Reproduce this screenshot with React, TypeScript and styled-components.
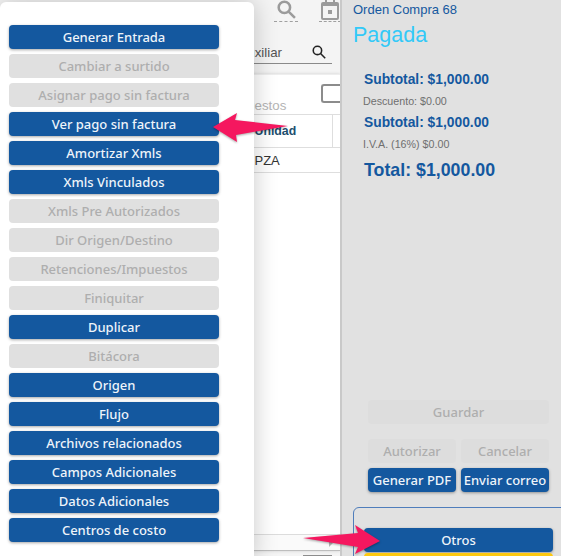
import * as React from "react";
import styled, { createGlobalStyle } from "styled-components";

const GlobalStyle = createGlobalStyle`
  html, body {
    margin: 0;
    padding: 0;
    width: 561px;
    height: 556px;
    overflow: hidden;
    background: #f4f4f4;
  }
`;

const Page = styled.div`
  position: relative;
  width: 561px;
  height: 556px;
  overflow: hidden;
  display: flex;
  font-family: "Liberation Sans", Arial, sans-serif;
`;

const Main = styled.div`
  width: 340px;
  height: 556px;
  flex: none;
  display: flex;
  flex-direction: column;
`;

const Toolbar = styled.div`
  height: 22px;
  flex: none;
  display: flex;
  justify-content: flex-end;
  gap: 21px;
  margin-right: -1px;
`;

const ToolItem = styled.div<{ $w: number }>`
  width: ${(p) => p.$w}px;
  height: 21px;
  border-bottom: 1px dashed #a0a0a0;
  display: flex;
  justify-content: center;
  color: #9b9b9b;
`;

const SearchRow = styled.div`
  margin: 20px 8px 0 200px;
  height: 21px;
  flex: none;
  display: flex;
  align-items: center;
  justify-content: flex-end;
  border-bottom: 1px solid #8a8a8a;
  font-size: 13.3px;
  color: #555;
  padding: 0 6px 0 0;
  gap: 30px;
`;

const SearchGlyph = styled.span`
  color: #222;
  display: flex;
  margin-top: -2px;
`;

const Sheet = styled.div`
  margin-top: 10px;
  flex: none;
  background: #fff;
  border-top: 1px solid #eee;
  box-shadow: 0 0 3px rgba(0, 0, 0, 0.15);
  height: 476px;
  display: flex;
  flex-direction: column;
`;

const SheetHead = styled.div`
  height: 30px;
  flex: none;
  display: flex;
  justify-content: space-between;
  padding: 9px 0 0 225px;
`;

const Hint = styled.span`
  align-self: flex-end;
  font-size: 13.3px;
  color: #b4b4b4;
  padding-bottom: 1px;
`;

const CheckBox = styled.span`
  width: 17px;
  height: 15px;
  border: 2px solid #8c8c8c;
  border-right: 0;
  border-radius: 3px 0 0 3px;
  align-self: flex-start;
`;

const TableRow = styled.div<{ $h: number; $head?: boolean }>`
  height: ${(p) => p.$h}px;
  flex: none;
  display: grid;
  grid-template-columns: 254.5px 78px 1fr;
  align-items: center;
  border-top: 1px solid #dedede;
  font-size: ${(p) => (p.$head ? 12.3 : 13)}px;
  color: ${(p) => (p.$head ? "#1d4f6e" : "#333")};
  font-weight: ${(p) => (p.$head ? 700 : 400)};
`;

const Cell = styled.div<{ $line?: boolean }>`
  height: 100%;
  display: flex;
  align-items: center;
  border-right: ${(p) => (p.$line ? "1px solid #dedede" : "0")};
`;

const SheetFooter = styled.div`
  margin-top: auto;
  height: 15px;
  flex: none;
  background: #fafafa;
  border-top: 1px solid #dcdcdc;
  border-bottom: 1px solid #bdbdbd;
  display: flex;
  justify-content: flex-end;
  align-items: center;
  padding-right: 7px;
`;

const ScrollArrow = styled.span`
  width: 0;
  height: 0;
  border-left: 4px solid #b5b5b5;
  border-top: 4px solid transparent;
  border-bottom: 4px solid transparent;
`;

const BottomBar = styled.div`
  margin: 4px 8px 0 303px;
  height: 2px;
  flex: none;
  background: #8c8c8c;
`;

const Panel = styled.div`
  flex: 1;
  border-left: 2px solid #c9c9c9;
  background: #e1e1e1;
  padding: 2px 0 0 11px;
  display: flex;
  flex-direction: column;
  min-width: 0;
`;

const Order = styled.div`
  font-size: 13px;
  line-height: 15px;
  color: #14589f;
`;

const Status = styled.div`
  font-size: 21.5px;
  line-height: 25px;
  color: #33c9f8;
  margin-top: 6px;
`;

const Totals = styled.div`
  margin: 24px 0 0 11px;
  display: flex;
  flex-direction: column;
`;

const Subtotal = styled.div`
  font-size: 13.8px;
  font-weight: 700;
  line-height: 16px;
  color: #14589f;
`;

const Note = styled.div`
  font-size: 10.7px;
  line-height: 12px;
  color: #6f6f6f;
  margin: 7px 0 8px -1px;
`;

const Total = styled.div`
  font-size: 17.8px;
  font-weight: 700;
  line-height: 20px;
  color: #14589f;
  margin-top: 2px;
`;

const Actions = styled.div`
  margin: 220px 12px 0 15px;
  display: grid;
  grid-template-columns: 88px 88px;
  column-gap: 5px;
  row-gap: 5px;
`;

const Btn = styled.div<{ $off?: boolean; $wide?: boolean; $gap?: number }>`
  height: 24px;
  border-radius: 4px;
  flex: none;
  display: flex;
  align-items: center;
  justify-content: center;
  white-space: nowrap;
  font-family: "Noto Sans", sans-serif;
  font-size: 13px;
  font-weight: 500;
  grid-column: ${(p) => (p.$wide ? "1 / span 2" : "auto")};
  margin-bottom: ${(p) => p.$gap ?? 0}px;
  background: ${(p) => (p.$off ? "#e0e0e0" : "#14589f")};
  color: ${(p) => (p.$off ? "#aeaeae" : "#eef4fa")};
  box-shadow: ${(p) => (p.$off ? "none" : "0 1px 3px rgba(0,0,0,.35)")};
`;

const PanelBtn = styled(Btn)`
  background: ${(p) => (p.$off ? "#dddddd" : "#14589f")};
`;

const Others = styled.fieldset`
  margin: 15px 0 0 0;
  padding: 20px 29px 0 10px;
  height: 60px;
  box-sizing: border-box;
  width: 230px;
  border: 1px solid #4f7dbb;
  border-radius: 6px 0 0 0;
  display: flex;
  flex-direction: column;
  gap: 1px;
  min-width: 0;
`;

const YellowBtn = styled.div`
  height: 12px;
  flex: none;
  border-radius: 4px 4px 0 0;
  background: #fdc90f;
`;

const Menu = styled.div`
  position: absolute;
  left: 0;
  top: 2px;
  width: 254px;
  height: 560px;
  box-sizing: border-box;
  padding: 23px 35px 0 9px;
  background: #fff;
  border-radius: 6px;
  box-shadow: 0 0 24px rgba(0, 0, 0, 0.22);
  display: flex;
  flex-direction: column;
  gap: 5px;
`;

const Arrows = styled.svg`
  position: absolute;
  left: 0;
  top: 0;
  pointer-events: none;
  filter: drop-shadow(0 1px 1px rgba(0, 0, 0, 0.35));
`;

const items: [string, boolean][] = [
  ["Generar Entrada", false],
  ["Cambiar a surtido", true],
  ["Asignar pago sin factura", true],
  ["Ver pago sin factura", false],
  ["Amortizar Xmls", false],
  ["Xmls Vinculados", false],
  ["Xmls Pre Autorizados", true],
  ["Dir Origen/Destino", true],
  ["Retenciones/Impuestos", true],
  ["Finiquitar", true],
  ["Duplicar", false],
  ["Bitácora", true],
  ["Origen", false],
  ["Flujo", false],
  ["Archivos relacionados", false],
  ["Campos Adicionales", false],
  ["Datos Adicionales", false],
  ["Centros de costo", false],
];

function SearchIcon({ size, width }: { size: number; width: number }) {
  return (
    <svg width={size} height={size} viewBox="0 0 18 18" fill="none" stroke="currentColor" strokeWidth={width}>
      <circle cx="7" cy="7" r="5.4" />
      <path d="M11 11l6 6" />
    </svg>
  );
}

function CalendarIcon() {
  return (
    <svg width="18" height="20" viewBox="0 0 18 20">
      <path
        fill="currentColor"
        d="M4 0h2v2h6V0h2v2h2a2 2 0 0 1 2 2v14a2 2 0 0 1-2 2H2a2 2 0 0 1-2-2V4a2 2 0 0 1 2-2h2zM2 6v12h14V6zm5 4h4v4H7z"
      />
    </svg>
  );
}

export default function App() {
  return (
    <Page>
      <GlobalStyle />
      <Main>
        <Toolbar>
          <ToolItem $w={24}>
            <SearchIcon size={19} width={2.4} />
          </ToolItem>
          <ToolItem $w={22}>
            <CalendarIcon />
          </ToolItem>
        </Toolbar>
        <SearchRow>
          Auxiliar
          <SearchGlyph>
            <SearchIcon size={14} width={2} />
          </SearchGlyph>
        </SearchRow>
        <Sheet>
          <SheetHead>
            <Hint>Impuestos</Hint>
            <CheckBox />
          </SheetHead>
          <TableRow $h={32} $head>
            <span />
            <Cell $line>Unidad</Cell>
            <span />
          </TableRow>
          <TableRow $h={24}>
            <span />
            <Cell>PZA</Cell>
            <span />
          </TableRow>
          <TableRow $h={1} />
          <SheetFooter>
            <ScrollArrow />
          </SheetFooter>
        </Sheet>
        <BottomBar />
      </Main>
      <Panel>
        <Order>Orden Compra 68</Order>
        <Status>Pagada</Status>
        <Totals>
          <Subtotal>Subtotal: $1,000.00</Subtotal>
          <Note>Descuento: $0.00</Note>
          <Subtotal>Subtotal: $1,000.00</Subtotal>
          <Note>I.V.A. (16%) $0.00</Note>
          <Total>Total: $1,000.00</Total>
        </Totals>
        <Actions>
          <PanelBtn $off $wide $gap={10}>
            Guardar
          </PanelBtn>
          <PanelBtn $off>Autorizar</PanelBtn>
          <PanelBtn $off>Cancelar</PanelBtn>
          <PanelBtn>Generar PDF</PanelBtn>
          <PanelBtn>Enviar correo</PanelBtn>
        </Actions>
        <Others>
          <Btn>Otros</Btn>
          <YellowBtn />
        </Others>
      </Panel>
      <Menu>
        {items.map(([label, off]) => (
          <Btn key={label} $off={off}>
            {label}
          </Btn>
        ))}
      </Menu>
      <Arrows width="561" height="556" viewBox="0 0 561 556">
        <path fill="#f5175f" d="M213 127L237 113L235 120L288 126L236 135L237 142Z" />
        <path fill="#f5175f" d="M380 541L355 525L358 533L303 538L358 547L355 554Z" />
      </Arrows>
    </Page>
  );
}
